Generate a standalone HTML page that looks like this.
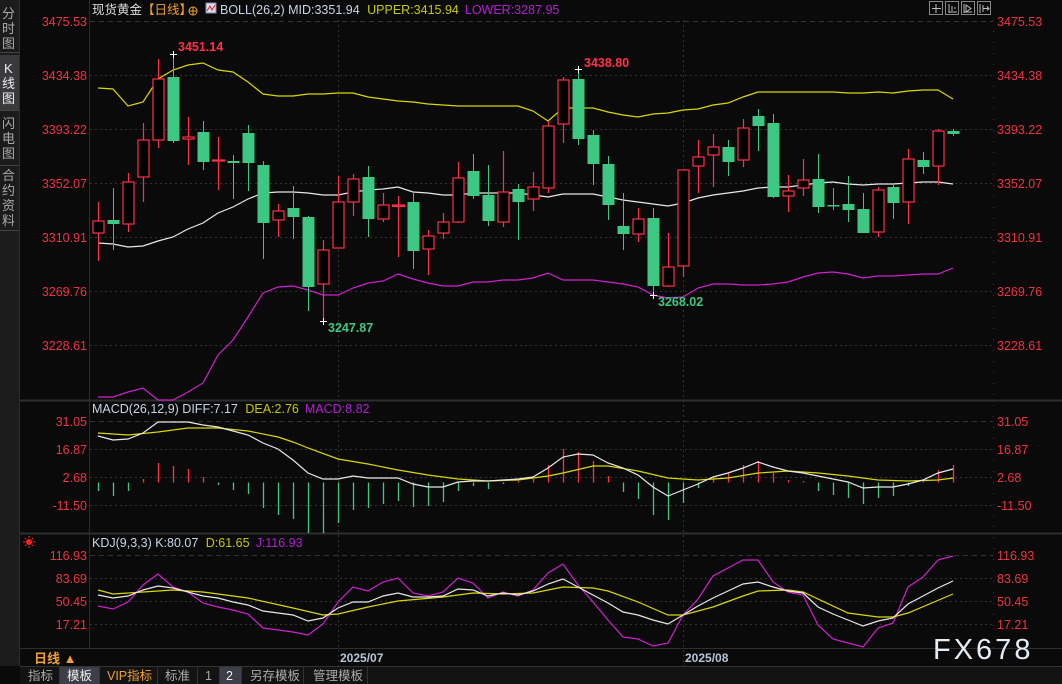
<!DOCTYPE html>
<html><head><meta charset="utf-8"><style>
html,body{margin:0;padding:0;background:#0a0a0a;width:1062px;height:684px;overflow:hidden}
svg{display:block}
text{font-family:"Liberation Sans","Noto Sans CJK SC",sans-serif}
.ax{fill:#ee3344;font-size:12.5px}
.cj{font-family:"Liberation Sans","Noto Sans CJK SC",sans-serif}
</style></head><body>
<svg width="1062" height="684" viewBox="0 0 1062 684" xmlns="http://www.w3.org/2000/svg">
<rect width="1062" height="684" fill="#0a0a0a"/>
<!-- sidebar -->
<rect x="0" y="0" width="19" height="666" fill="#1b1b1b"/>
<rect x="0" y="55" width="19" height="55" fill="#3a3a3d"/>
<g fill="#aaaaaa" font-size="13" class="cj">
<text x="2" y="18">分</text><text x="2" y="33">时</text><text x="2" y="48">图</text>
<text x="4" y="73" fill="#eeeeee">K</text><text x="2" y="88" fill="#eeeeee">线</text><text x="2" y="103" fill="#eeeeee">图</text>
<text x="2" y="128">闪</text><text x="2" y="143">电</text><text x="2" y="158">图</text>
<text x="2" y="180">合</text><text x="2" y="195">约</text><text x="2" y="210">资</text><text x="2" y="225">料</text>
</g>
<line x1="0" y1="52.5" x2="19" y2="52.5" stroke="#444"/><line x1="0" y1="110.5" x2="19" y2="110.5" stroke="#444"/><line x1="0" y1="165.5" x2="19" y2="165.5" stroke="#444"/><line x1="0" y1="230.5" x2="19" y2="230.5" stroke="#444"/>
<line x1="19.5" y1="0" x2="19.5" y2="666" stroke="#2e2e2e"/>
<!-- panel frame -->
<line x1="89.5" y1="0" x2="89.5" y2="648" stroke="#2c2c2c"/>
<line x1="20" y1="400.5" x2="1062" y2="400.5" stroke="#2e2e2e" stroke-width="2"/>
<line x1="20" y1="533.5" x2="1062" y2="533.5" stroke="#2e2e2e" stroke-width="2"/>
<line x1="20" y1="648.5" x2="1062" y2="648.5" stroke="#2e2e2e"/>
<line x1="993.5" y1="20" x2="993.5" y2="648" stroke="#333" stroke-dasharray="1,10"/>
<!-- grid -->
<g stroke="#333" stroke-dasharray="2,3">
<line x1="90" y1="21.5" x2="993" y2="21.5" stroke-dasharray="5,4"/>
<line x1="90" y1="75.5" x2="993" y2="75.5"/><line x1="90" y1="129.5" x2="993" y2="129.5"/><line x1="90" y1="183.5" x2="993" y2="183.5"/><line x1="90" y1="237.5" x2="993" y2="237.5"/><line x1="90" y1="291.5" x2="993" y2="291.5"/><line x1="90" y1="345.5" x2="993" y2="345.5"/>
<line x1="90" y1="421.5" x2="993" y2="421.5" stroke-dasharray="5,4"/><line x1="90" y1="449.5" x2="993" y2="449.5"/><line x1="90" y1="477.5" x2="993" y2="477.5"/><line x1="90" y1="505.5" x2="993" y2="505.5"/>
<line x1="90" y1="555.5" x2="993" y2="555.5" stroke-dasharray="5,4"/><line x1="90" y1="578.5" x2="993" y2="578.5"/><line x1="90" y1="601.5" x2="993" y2="601.5"/><line x1="90" y1="624.5" x2="993" y2="624.5"/>
<line x1="338.5" y1="20" x2="338.5" y2="666"/><line x1="683.5" y1="20" x2="683.5" y2="666"/>
</g>
<!-- axis labels -->
<g class="ax" text-anchor="end">
<text x="87" y="26">3475.53</text><text x="87" y="80">3434.38</text><text x="87" y="134">3393.22</text><text x="87" y="188">3352.07</text><text x="87" y="242">3310.91</text><text x="87" y="296">3269.76</text><text x="87" y="350">3228.61</text>
<text x="87" y="426">31.05</text><text x="87" y="454">16.87</text><text x="87" y="482">2.68</text><text x="87" y="510">-11.50</text>
<text x="87" y="560">116.93</text><text x="87" y="583">83.69</text><text x="87" y="606">50.45</text><text x="87" y="629">17.21</text>
</g>
<g class="ax">
<text x="997" y="26">3475.53</text><text x="997" y="80">3434.38</text><text x="997" y="134">3393.22</text><text x="997" y="188">3352.07</text><text x="997" y="242">3310.91</text><text x="997" y="296">3269.76</text><text x="997" y="350">3228.61</text>
<text x="997" y="426">31.05</text><text x="997" y="454">16.87</text><text x="997" y="482">2.68</text><text x="997" y="510">-11.50</text>
<text x="997" y="560">116.93</text><text x="997" y="583">83.69</text><text x="997" y="606">50.45</text><text x="997" y="629">17.21</text>
</g>
<!-- header -->
<text x="92" y="14" font-size="12.5" fill="#dddddd" class="cj">现货黄金<tspan fill="#f0a030">【日线】</tspan></text>
<circle cx="193" cy="11" r="4" fill="none" stroke="#f0a030"/><line x1="189" y1="11" x2="197" y2="11" stroke="#f0a030"/><line x1="193" y1="7" x2="193" y2="15" stroke="#f0a030"/>
<rect x="206" y="3" width="10" height="10" fill="#dde" stroke="#88a"/><polyline points="207,11 210,6 212,10 215,5" fill="none" stroke="#d22" stroke-width="1"/>
<text x="220" y="14" font-size="12.5" fill="#c8d4e8">BOLL(26,2) MID:3351.94 <tspan fill="#c8c800" dx="4">UPPER:3415.94</tspan><tspan fill="#b020d0" dx="6">LOWER:3287.95</tspan></text>
<g fill="none" stroke="#888" stroke-width="1">
<rect x="929.5" y="1.5" width="13" height="13"/><rect x="945.5" y="1.5" width="13" height="13"/><rect x="961.5" y="1.5" width="13" height="13"/><rect x="977.5" y="1.5" width="13" height="13"/>
<path d="M936 4v9M932 8.5h9" stroke="#bbb"/><path d="M949 4v9M949 12h8M952 6v5M954 8h2" stroke="#bbb"/><path d="M964 4v9M964 12h8M966 5l5 3.5-5 3.5z" stroke="#bbb"/><path d="M980 4v9M983 5v7M983 8.5h6M987 6.5l2 2-2 2" stroke="#bbb"/>
</g>
<text x="92" y="413" font-size="12.5" fill="#c8d4e8">MACD(26,12,9) DIFF:7.17 <tspan fill="#c8c800" dx="4">DEA:2.76</tspan><tspan fill="#b020d0" dx="6">MACD:8.82</tspan></text>
<text x="92" y="547" font-size="12.5" fill="#c8d4e8">KDJ(9,3,3) K:80.07 <tspan fill="#c8c800" dx="4">D:61.65</tspan><tspan fill="#b020d0" dx="6">J:116.93</tspan></text>
<g stroke="#ff2020" stroke-width="1"><circle cx="29" cy="542" r="2.5" fill="#ff2020"/><path d="M29 536v2M29 546v2M23 542h2M33 542h2M25 538l1.3 1.3M33 538l-1.3 1.3M25 546l1.3-1.3M33 546l-1.3-1.3"/></g>
<!-- bollinger -->
<polyline fill="none" stroke="#d8d800" stroke-width="1.2" points="98,88 113,89 128,106 143,102 158,79 173,70 188,65 203,63 218,70 233,72 248,82 263,94 278,96 293,96 308,94 323,94 338,93 353,93 368,97 383,99 398,101 413,102 428,104 443,105 458,106 473,106 488,106 503,106 518,106 533,111 548,121 563,108 578,108 593,108 608,112 623,115 638,117 653,114 668,113 683,110 698,109 713,105 728,103 743,97 758,92 773,92 788,92 803,92 818,92 833,92 848,93 863,93 878,92 893,93 908,91 923,90 938,90 953,99"/>
<polyline fill="none" stroke="#e8e8e8" stroke-width="1.2" points="98,243 113,244 128,247 143,246 158,241 173,237 188,229 203,223 218,213 233,207 248,199 263,193 278,192 293,192 308,193 323,195 338,195 353,192 368,190 383,189 398,187 413,192 428,193 443,195 458,195 473,193 488,193 503,193 518,193 533,195 548,197 563,194 578,194 593,194 608,197 623,200 638,202 653,204 668,206 683,203 698,198 713,195 728,193 743,191 758,188 773,187 788,187 803,185 818,183 833,182 848,184 863,185 878,184 893,184 908,183 923,182 938,182 953,184"/>
<polyline fill="none" stroke="#d020d0" stroke-width="1.2" points="98,397 113,397 128,392 143,388 158,400 173,400 188,392 203,383 218,355 233,340 248,317 263,293 278,287 293,286 308,290 323,295 338,295 353,288 368,283 383,281 398,274 413,279 428,283 443,286 458,286 473,282 488,282 503,280 518,280 533,278 548,273 563,280 578,280 593,280 608,282 623,284 638,287 653,295 668,298 683,297 698,288 713,284 728,284 743,285 758,285 773,284 788,282 803,277 818,273 833,272 848,274 863,278 878,276 893,276 908,275 923,274 938,274 953,268"/>
<!-- candles: green -->
<g stroke="#3cc882" fill="#3cc882">
<line x1="113.5" y1="188" x2="113.5" y2="250"/><rect x="107.5" y="220" width="12" height="4" stroke="none"/>
<line x1="173.5" y1="54" x2="173.5" y2="143"/><rect x="167.5" y="77" width="12" height="64" stroke="none"/>
<line x1="203.5" y1="121" x2="203.5" y2="170"/><rect x="197.5" y="132" width="12" height="30" stroke="none"/>
<line x1="233.5" y1="155" x2="233.5" y2="199"/><rect x="227.5" y="161" width="12" height="2" stroke="none"/>
<line x1="248.5" y1="125" x2="248.5" y2="191"/><rect x="242.5" y="133" width="12" height="30" stroke="none"/>
<line x1="263.5" y1="161" x2="263.5" y2="259"/><rect x="257.5" y="165" width="12" height="58" stroke="none"/>
<line x1="293.5" y1="186" x2="293.5" y2="239"/><rect x="287.5" y="208" width="12" height="9" stroke="none"/>
<line x1="308.5" y1="216" x2="308.5" y2="311"/><rect x="302.5" y="217" width="12" height="70" stroke="none"/>
<line x1="368.5" y1="166" x2="368.5" y2="237"/><rect x="362.5" y="177" width="12" height="42" stroke="none"/>
<line x1="413.5" y1="192" x2="413.5" y2="269"/><rect x="407.5" y="202" width="12" height="49" stroke="none"/>
<line x1="473.5" y1="154" x2="473.5" y2="199"/><rect x="467.5" y="171" width="12" height="25" stroke="none"/>
<line x1="488.5" y1="165" x2="488.5" y2="226"/><rect x="482.5" y="195" width="12" height="26" stroke="none"/>
<line x1="518.5" y1="184" x2="518.5" y2="240"/><rect x="512.5" y="189" width="12" height="13" stroke="none"/>
<line x1="578.5" y1="69" x2="578.5" y2="145"/><rect x="572.5" y="79" width="12" height="60" stroke="none"/>
<line x1="593.5" y1="130" x2="593.5" y2="185"/><rect x="587.5" y="135" width="12" height="29" stroke="none"/>
<line x1="608.5" y1="156" x2="608.5" y2="220"/><rect x="602.5" y="164" width="12" height="41" stroke="none"/>
<line x1="623.5" y1="193" x2="623.5" y2="250"/><rect x="617.5" y="226" width="12" height="8" stroke="none"/>
<line x1="653.5" y1="208" x2="653.5" y2="295"/><rect x="647.5" y="218" width="12" height="68" stroke="none"/>
<line x1="728.5" y1="140" x2="728.5" y2="176"/><rect x="722.5" y="147" width="12" height="15" stroke="none"/>
<line x1="758.5" y1="109" x2="758.5" y2="151"/><rect x="752.5" y="116" width="12" height="10" stroke="none"/>
<line x1="773.5" y1="114" x2="773.5" y2="198"/><rect x="767.5" y="123" width="12" height="74" stroke="none"/>
<line x1="818.5" y1="154" x2="818.5" y2="213"/><rect x="812.5" y="179" width="12" height="28" stroke="none"/>
<line x1="833.5" y1="188" x2="833.5" y2="210"/><rect x="827.5" y="205" width="12" height="1.5" stroke="none"/>
<line x1="848.5" y1="176" x2="848.5" y2="222"/><rect x="842.5" y="204" width="12" height="6" stroke="none"/>
<line x1="863.5" y1="193" x2="863.5" y2="233"/><rect x="857.5" y="209" width="12" height="24" stroke="none"/>
<line x1="893.5" y1="184" x2="893.5" y2="219"/><rect x="887.5" y="187" width="12" height="16" stroke="none"/>
<line x1="923.5" y1="152" x2="923.5" y2="174"/><rect x="917.5" y="160" width="12" height="7" stroke="none"/>
<line x1="953.5" y1="129" x2="953.5" y2="136"/><rect x="947.5" y="131" width="12" height="3" stroke="none"/>
</g>
<!-- candles: red hollow -->
<g stroke="#ff3048" fill="#000" stroke-width="1.2">
<line x1="98.5" y1="202" x2="98.5" y2="261"/><rect x="93" y="221" width="11" height="12"/>
<line x1="128.5" y1="173" x2="128.5" y2="232"/><rect x="123" y="182" width="11" height="42"/>
<line x1="143.5" y1="123" x2="143.5" y2="202"/><rect x="138" y="140" width="11" height="37"/>
<line x1="158.5" y1="59" x2="158.5" y2="148"/><rect x="153" y="79" width="11" height="61"/>
<line x1="188.5" y1="117" x2="188.5" y2="165"/><rect x="183" y="137" width="11" height="2"/>
<line x1="218.5" y1="137" x2="218.5" y2="190"/><rect x="212.5" y="160" width="12" height="1"/>
<line x1="278.5" y1="204" x2="278.5" y2="237"/><rect x="273" y="211" width="11" height="9"/>
<line x1="323.5" y1="240" x2="323.5" y2="322"/><rect x="318" y="250" width="11" height="34"/>
<line x1="338.5" y1="176" x2="338.5" y2="248"/><rect x="333" y="202" width="11" height="46"/>
<line x1="353.5" y1="174" x2="353.5" y2="216"/><rect x="348" y="179" width="11" height="23"/>
<line x1="383.5" y1="193" x2="383.5" y2="222"/><rect x="378" y="205" width="11" height="14"/>
<line x1="398.5" y1="196" x2="398.5" y2="257"/><rect x="392.5" y="205" width="12" height="1.5" fill="#ff3048"/>
<line x1="428.5" y1="230" x2="428.5" y2="275"/><rect x="423" y="236" width="11" height="13"/>
<line x1="443.5" y1="213" x2="443.5" y2="239"/><rect x="438" y="222" width="11" height="11"/>
<line x1="458.5" y1="162" x2="458.5" y2="223"/><rect x="453" y="178" width="11" height="44"/>
<line x1="503.5" y1="151" x2="503.5" y2="227"/><rect x="498" y="192" width="11" height="30"/>
<line x1="533.5" y1="172" x2="533.5" y2="211"/><rect x="528" y="187" width="11" height="12"/>
<line x1="548.5" y1="121" x2="548.5" y2="193"/><rect x="543" y="126" width="11" height="62"/>
<line x1="563.5" y1="77" x2="563.5" y2="143"/><rect x="558" y="80" width="11" height="44"/>
<line x1="638.5" y1="208" x2="638.5" y2="242"/><rect x="633" y="219" width="11" height="15"/>
<line x1="668.5" y1="233" x2="668.5" y2="287"/><rect x="663" y="267" width="11" height="19"/>
<line x1="683.5" y1="169" x2="683.5" y2="277"/><rect x="678" y="170" width="11" height="96"/>
<line x1="698.5" y1="140" x2="698.5" y2="193"/><rect x="693" y="157" width="11" height="9"/>
<line x1="713.5" y1="134" x2="713.5" y2="187"/><rect x="708" y="147" width="11" height="8"/>
<line x1="743.5" y1="119" x2="743.5" y2="167"/><rect x="738" y="128" width="11" height="32"/>
<line x1="788.5" y1="175" x2="788.5" y2="212"/><rect x="783" y="191" width="11" height="5"/>
<line x1="803.5" y1="159" x2="803.5" y2="196"/><rect x="798" y="180" width="11" height="8"/>
<line x1="878.5" y1="187" x2="878.5" y2="237"/><rect x="873" y="190" width="11" height="42"/>
<line x1="908.5" y1="149" x2="908.5" y2="224"/><rect x="903" y="159" width="11" height="43"/>
<line x1="938.5" y1="129" x2="938.5" y2="185"/><rect x="933" y="131" width="11" height="35"/>
</g>
<!-- markers -->
<g stroke="#ffffff" stroke-width="1"><path d="M170 54.5h7M173.5 51v7"/><path d="M575 69.5h7M578.5 66v7"/><path d="M320 321.5h7M323.5 318v7"/><path d="M650 295.5h7M653.5 292v7"/></g>
<g font-size="12.5" font-weight="bold"><text x="178" y="51" fill="#ff3048">3451.14</text><text x="584" y="67" fill="#ff3048">3438.80</text><text x="328" y="332" fill="#3cc882">3247.87</text><text x="658" y="306" fill="#3cc882">3268.02</text></g>
<!-- MACD histogram -->
<g stroke-width="1.3">
<path stroke="#3cc882" d="M98.5 482.5V491M113.5 482.5V496M128.5 482.5V491M218.5 482.5V485M233.5 482.5V490M248.5 482.5V494M263.5 482.5V508M278.5 482.5V515M293.5 482.5V519M308.5 482.5V533M323.5 482.5V533M338.5 482.5V523M353.5 482.5V510M368.5 482.5V508M383.5 482.5V504M398.5 482.5V501M413.5 482.5V507M428.5 482.5V506M443.5 482.5V502M458.5 482.5V491M473.5 482.5V486M488.5 482.5V489M503.5 482.5V484M623.5 482.5V492M638.5 482.5V499M653.5 482.5V515M668.5 482.5V520M683.5 482.5V503M698.5 482.5V488M818.5 482.5V491M833.5 482.5V495M848.5 482.5V498M863.5 482.5V504M878.5 482.5V498M893.5 482.5V496M908.5 482.5V486"/>
<path stroke="#ff3048" d="M143.5 482.5V479M158.5 482.5V463M173.5 482.5V466M188.5 482.5V469M203.5 482.5V477M518.5 482.5V481M533.5 482.5V479M548.5 482.5V465M563.5 482.5V449M578.5 482.5V452M593.5 482.5V461M608.5 482.5V476M713.5 482.5V477M728.5 482.5V473M743.5 482.5V465M758.5 482.5V461M773.5 482.5V473M788.5 482.5V480M803.5 482.5V481M923.5 482.5V480M938.5 482.5V470M953.5 482.5V465"/>
</g>
<polyline fill="none" stroke="#d8d800" stroke-width="1.2" points="98,433 128,435 158,432 188,428 218,428 248,431 278,437 293,442 308,448 338,459 368,464 398,470 428,475 458,479 488,481 518,480 548,476 563,473 593,466 608,466 638,471 668,478 698,480 728,478 758,473 788,471 818,473 848,476 878,480 908,481 938,480 953,478"/>
<polyline fill="none" stroke="#e8e8e8" stroke-width="1.2" points="98,436 113,440 128,439 143,433 158,422 173,422 188,422 203,425 218,427 233,431 248,435 263,443 278,449 293,460 308,473 323,479 338,479 353,476 368,478 383,478 398,478 413,484 428,487 443,487 458,482 473,481 488,481 503,480 518,479 533,477 548,468 563,457 578,454 593,455 608,463 623,468 638,475 653,487 668,496 683,490 698,484 713,477 728,473 743,468 758,462 773,467 788,471 803,473 818,476 833,479 848,482 863,488 878,487 893,487 908,484 923,480 938,473 953,469"/>
<!-- KDJ -->
<polyline fill="none" stroke="#d020d0" stroke-width="1.2" points="98,606 113,609 128,602 143,585 158,574 173,587 188,592 203,603 218,607 233,610 248,614 263,628 278,630 293,632 308,635 323,624 338,602 353,587 368,591 383,582 398,578 413,593 428,596 443,592 458,578 473,583 488,598 503,592 518,596 533,590 548,573 563,564 578,585 593,602 608,620 623,637 638,639 653,646 668,643 683,615 698,599 713,576 728,568 743,560 758,560 773,582 788,592 803,595 818,625 833,639 848,643 863,647 878,628 893,623 908,587 923,577 938,560 953,556"/>
<polyline fill="none" stroke="#d8d800" stroke-width="1.2" points="98,590 113,594 143,592 173,590 203,592 248,598 293,608 323,615 338,614 368,607 398,601 443,597 473,593 503,594 533,593 563,587 593,588 608,591 638,602 668,615 683,615 713,607 743,596 758,591 788,590 803,592 848,613 878,617 893,617 908,613 953,594"/>
<polyline fill="none" stroke="#e8e8e8" stroke-width="1.2" points="98,595 113,598 128,596 143,590 158,586 173,588 188,592 203,596 218,598 233,602 248,605 263,611 278,613 293,615 308,621 323,618 338,608 353,602 368,602 383,596 398,593 413,597 428,597 443,596 458,589 473,590 488,596 503,593 518,595 533,591 548,584 563,579 578,587 593,595 608,603 623,612 638,615 653,620 668,624 683,615 698,606 713,598 728,591 743,584 758,582 773,587 788,591 803,593 818,607 833,614 848,620 863,626 878,621 893,618 908,604 923,596 938,588 953,581"/>
<!-- bottom axis -->
<text x="34" y="663" font-size="13" fill="#f0a030" font-weight="bold" class="cj">日线 ▲</text>
<g font-size="12" fill="#b8c4d8" font-weight="bold"><text x="340" y="662">2025/07</text><text x="685" y="662">2025/08</text></g>
<text x="933" y="659" font-size="29" fill="#e4ecf4" letter-spacing="3">FX678</text>
<!-- tab bar -->
<rect x="20" y="667" width="1042" height="17" fill="#131313"/>
<line x1="20" y1="666.5" x2="1062" y2="666.5" stroke="#333"/>
<rect x="60" y="667" width="39" height="17" fill="#3c3f48"/>
<rect x="220" y="667" width="21" height="17" fill="#3c3f48"/>
<g stroke="#333"><path d="M59.5 667v17M99.5 667v17M157.5 667v17M197.5 667v17M219.5 667v17M241.5 667v17M303.5 667v17M367.5 667v17"/></g>
<g font-size="12.5" fill="#aaaaaa" class="cj">
<text x="28" y="680">指标</text><text x="67" y="680" fill="#eeeeee">模板</text><text x="107" y="680" fill="#f0a030">VIP指标</text><text x="165" y="680">标准</text><text x="205" y="680">1</text><text x="226" y="680" fill="#eeeeee">2</text><text x="250" y="680">另存模板</text><text x="313" y="680">管理模板</text>
</g>
</svg>
</body></html>
